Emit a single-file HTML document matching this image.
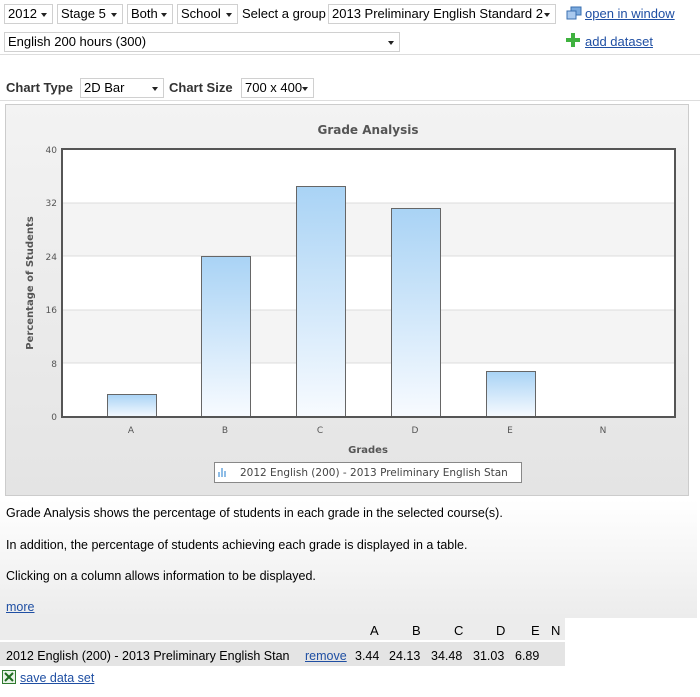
<!DOCTYPE html>
<html><head><style>
body{margin:0;width:700px;height:697px;background:#fff;font-family:"Liberation Sans",Arial,sans-serif;font-size:13px;color:#000;position:relative;overflow:hidden}
.a{position:absolute;white-space:nowrap}
.sel{position:absolute;height:18px;border:1px solid #d0d0d0;background:#fff;font-size:13px;line-height:18px;padding-left:3px;box-sizing:border-box;height:20px}
.sel:after{content:"";position:absolute;right:5px;top:8px;border-left:3px solid transparent;border-right:3px solid transparent;border-top:4px solid #222}
a{color:#1f4fa3;text-decoration:underline}
</style></head><body>
<div class="sel" style="left:4px;top:4px;width:49px">2012</div>
<div class="sel" style="left:57px;top:4px;width:66px">Stage 5</div>
<div class="sel" style="left:127px;top:4px;width:46px">Both</div>
<div class="sel" style="left:177px;top:4px;width:61px">School</div>
<div class="a" style="left:242px;top:6px">Select a group</div>
<div class="sel" style="left:328px;top:4px;width:228px">2013 Preliminary English Standard 2</div>
<svg class="a" style="left:566px;top:6px" width="16" height="14"><rect x="5" y="1" width="10" height="8" fill="#7aa9dd" stroke="#3a6fb0"/><rect x="1" y="5" width="9" height="8" fill="#a9c9ee" stroke="#3a6fb0"/></svg>
<a class="a" style="left:585px;top:6px">open in window</a>
<div class="sel" style="left:4px;top:32px;width:396px">English 200 hours (300)</div>
<svg class="a" style="left:566px;top:33px" width="14" height="14"><path d="M5 0h4v5h5v4h-5v5h-4v-5h-5v-4h5z" fill="#3fb23f"/></svg>
<a class="a" style="left:585px;top:34px">add dataset</a>
<div class="a" style="left:0;top:54px;width:700px;height:1px;background:#ddd"></div>
<div class="a" style="left:6px;top:80px;font-weight:bold;color:#333">Chart Type</div>
<div class="sel" style="left:80px;top:78px;width:84px">2D Bar</div>
<div class="a" style="left:169px;top:80px;font-weight:bold;color:#333">Chart Size</div>
<div class="sel" style="left:241px;top:78px;width:73px">700 x 400</div>
<div class="a" style="left:0;top:100px;width:700px;height:1px;background:#ddd"></div>
<div class="a" style="left:5px;top:104px;width:684px;height:392px;border:1px solid #ccc;background:linear-gradient(#f3f3f3,#e4e4e4);box-sizing:border-box"></div>
<svg class="a" style="left:0;top:0" width="700" height="500" font-family="DejaVu Sans,sans-serif">
<text x="368" y="134" text-anchor="middle" font-size="12" font-weight="bold" fill="#555">Grade Analysis</text>
<rect x="62" y="149" width="613" height="268" fill="#fff"/>
<rect x="62" y="203" width="613" height="53" fill="#f4f4f4"/>
<rect x="62" y="310" width="613" height="53" fill="#f4f4f4"/>
<g stroke="#ddd"><line x1="62" x2="675" y1="203" y2="203"/><line x1="62" x2="675" y1="256" y2="256"/><line x1="62" x2="675" y1="310" y2="310"/><line x1="62" x2="675" y1="363" y2="363"/></g>
<defs><linearGradient id="g" x1="0" y1="0" x2="0" y2="1"><stop offset="0" stop-color="#a9d3f5"/><stop offset="1" stop-color="#f8fbff"/></linearGradient></defs>
<g fill="url(#g)" stroke="#666"><rect x="107.5" y="394.5" width="49" height="23"/><rect x="201.5" y="256.5" width="49" height="161"/><rect x="296.5" y="186.5" width="49" height="231"/><rect x="391.5" y="208.5" width="49" height="209"/><rect x="486.5" y="371.5" width="49" height="46"/></g>
<rect x="62" y="149" width="613" height="268" fill="none" stroke="#555" stroke-width="2"/>
<g font-size="9" fill="#555" text-anchor="end"><text x="57" y="153">40</text><text x="57" y="206">32</text><text x="57" y="260">24</text><text x="57" y="313">16</text><text x="57" y="367">8</text><text x="57" y="420">0</text></g>
<g font-size="9" fill="#555" text-anchor="middle"><text x="131" y="433">A</text><text x="225" y="433">B</text><text x="320" y="433">C</text><text x="415" y="433">D</text><text x="510" y="433">E</text><text x="603" y="433">N</text></g>
<text x="368" y="453" text-anchor="middle" font-size="10" font-weight="bold" fill="#555">Grades</text>
<text transform="translate(33 283) rotate(-90)" text-anchor="middle" font-size="10" font-weight="bold" fill="#555">Percentage of Students</text>
<rect x="214.5" y="462.5" width="307" height="20" fill="#fff" stroke="#888"/>
<g fill="#8fbde6"><rect x="218" y="472" width="2" height="5"/><rect x="221" y="468" width="2" height="9"/><rect x="224" y="471" width="2" height="6"/></g>
<text x="240" y="476" font-size="10.5" fill="#444">2012 English (200) - 2013 Preliminary English Stan</text>
</svg>
<div class="a" style="left:0;top:500px;width:697px;height:118px;background:linear-gradient(#fff,#ececec)"></div>
<div class="a" style="left:6px;top:506px;font-size:12.5px">Grade Analysis shows the percentage of students in each grade in the selected course(s).</div>
<div class="a" style="left:6px;top:538px;font-size:12.5px">In addition, the percentage of students achieving each grade is displayed in a table.</div>
<div class="a" style="left:6px;top:569px;font-size:12.5px">Clicking on a column allows information to be displayed.</div>
<a class="a" style="left:6px;top:600px;font-size:12.5px">more</a>
<div class="a" style="left:0;top:618px;width:565px;height:22px;background:#ececec"></div>
<div class="a" style="left:0;top:642px;width:565px;height:24px;background:#e4e4e4"></div>
<div class="a" style="top:623px;left:370px">A</div><div class="a" style="top:623px;left:412px">B</div><div class="a" style="top:623px;left:454px">C</div><div class="a" style="top:623px;left:496px">D</div><div class="a" style="top:623px;left:531px">E</div><div class="a" style="top:623px;left:551px">N</div>
<div class="a" style="left:6px;top:649px;font-size:12.5px">2012 English (200) - 2013 Preliminary English Stan</div>
<a class="a" style="left:305px;top:649px;font-size:12.5px">remove</a>
<div class="a" style="left:355px;top:649px;font-size:12.5px">3.44</div><div class="a" style="left:389px;top:649px;font-size:12.5px">24.13</div><div class="a" style="left:431px;top:649px;font-size:12.5px">34.48</div><div class="a" style="left:473px;top:649px;font-size:12.5px">31.03</div><div class="a" style="left:515px;top:649px;font-size:12.5px">6.89</div>
<svg class="a" style="left:2px;top:670px" width="14" height="14"><rect x="0.5" y="0.5" width="13" height="13" fill="#e8f3e8" stroke="#2f7a2f"/><path d="M3 3l8 8M11 3l-8 8" stroke="#1e6b1e" stroke-width="2"/></svg>
<a class="a" style="left:20px;top:671px;font-size:12.5px">save data set</a>
</body></html>
